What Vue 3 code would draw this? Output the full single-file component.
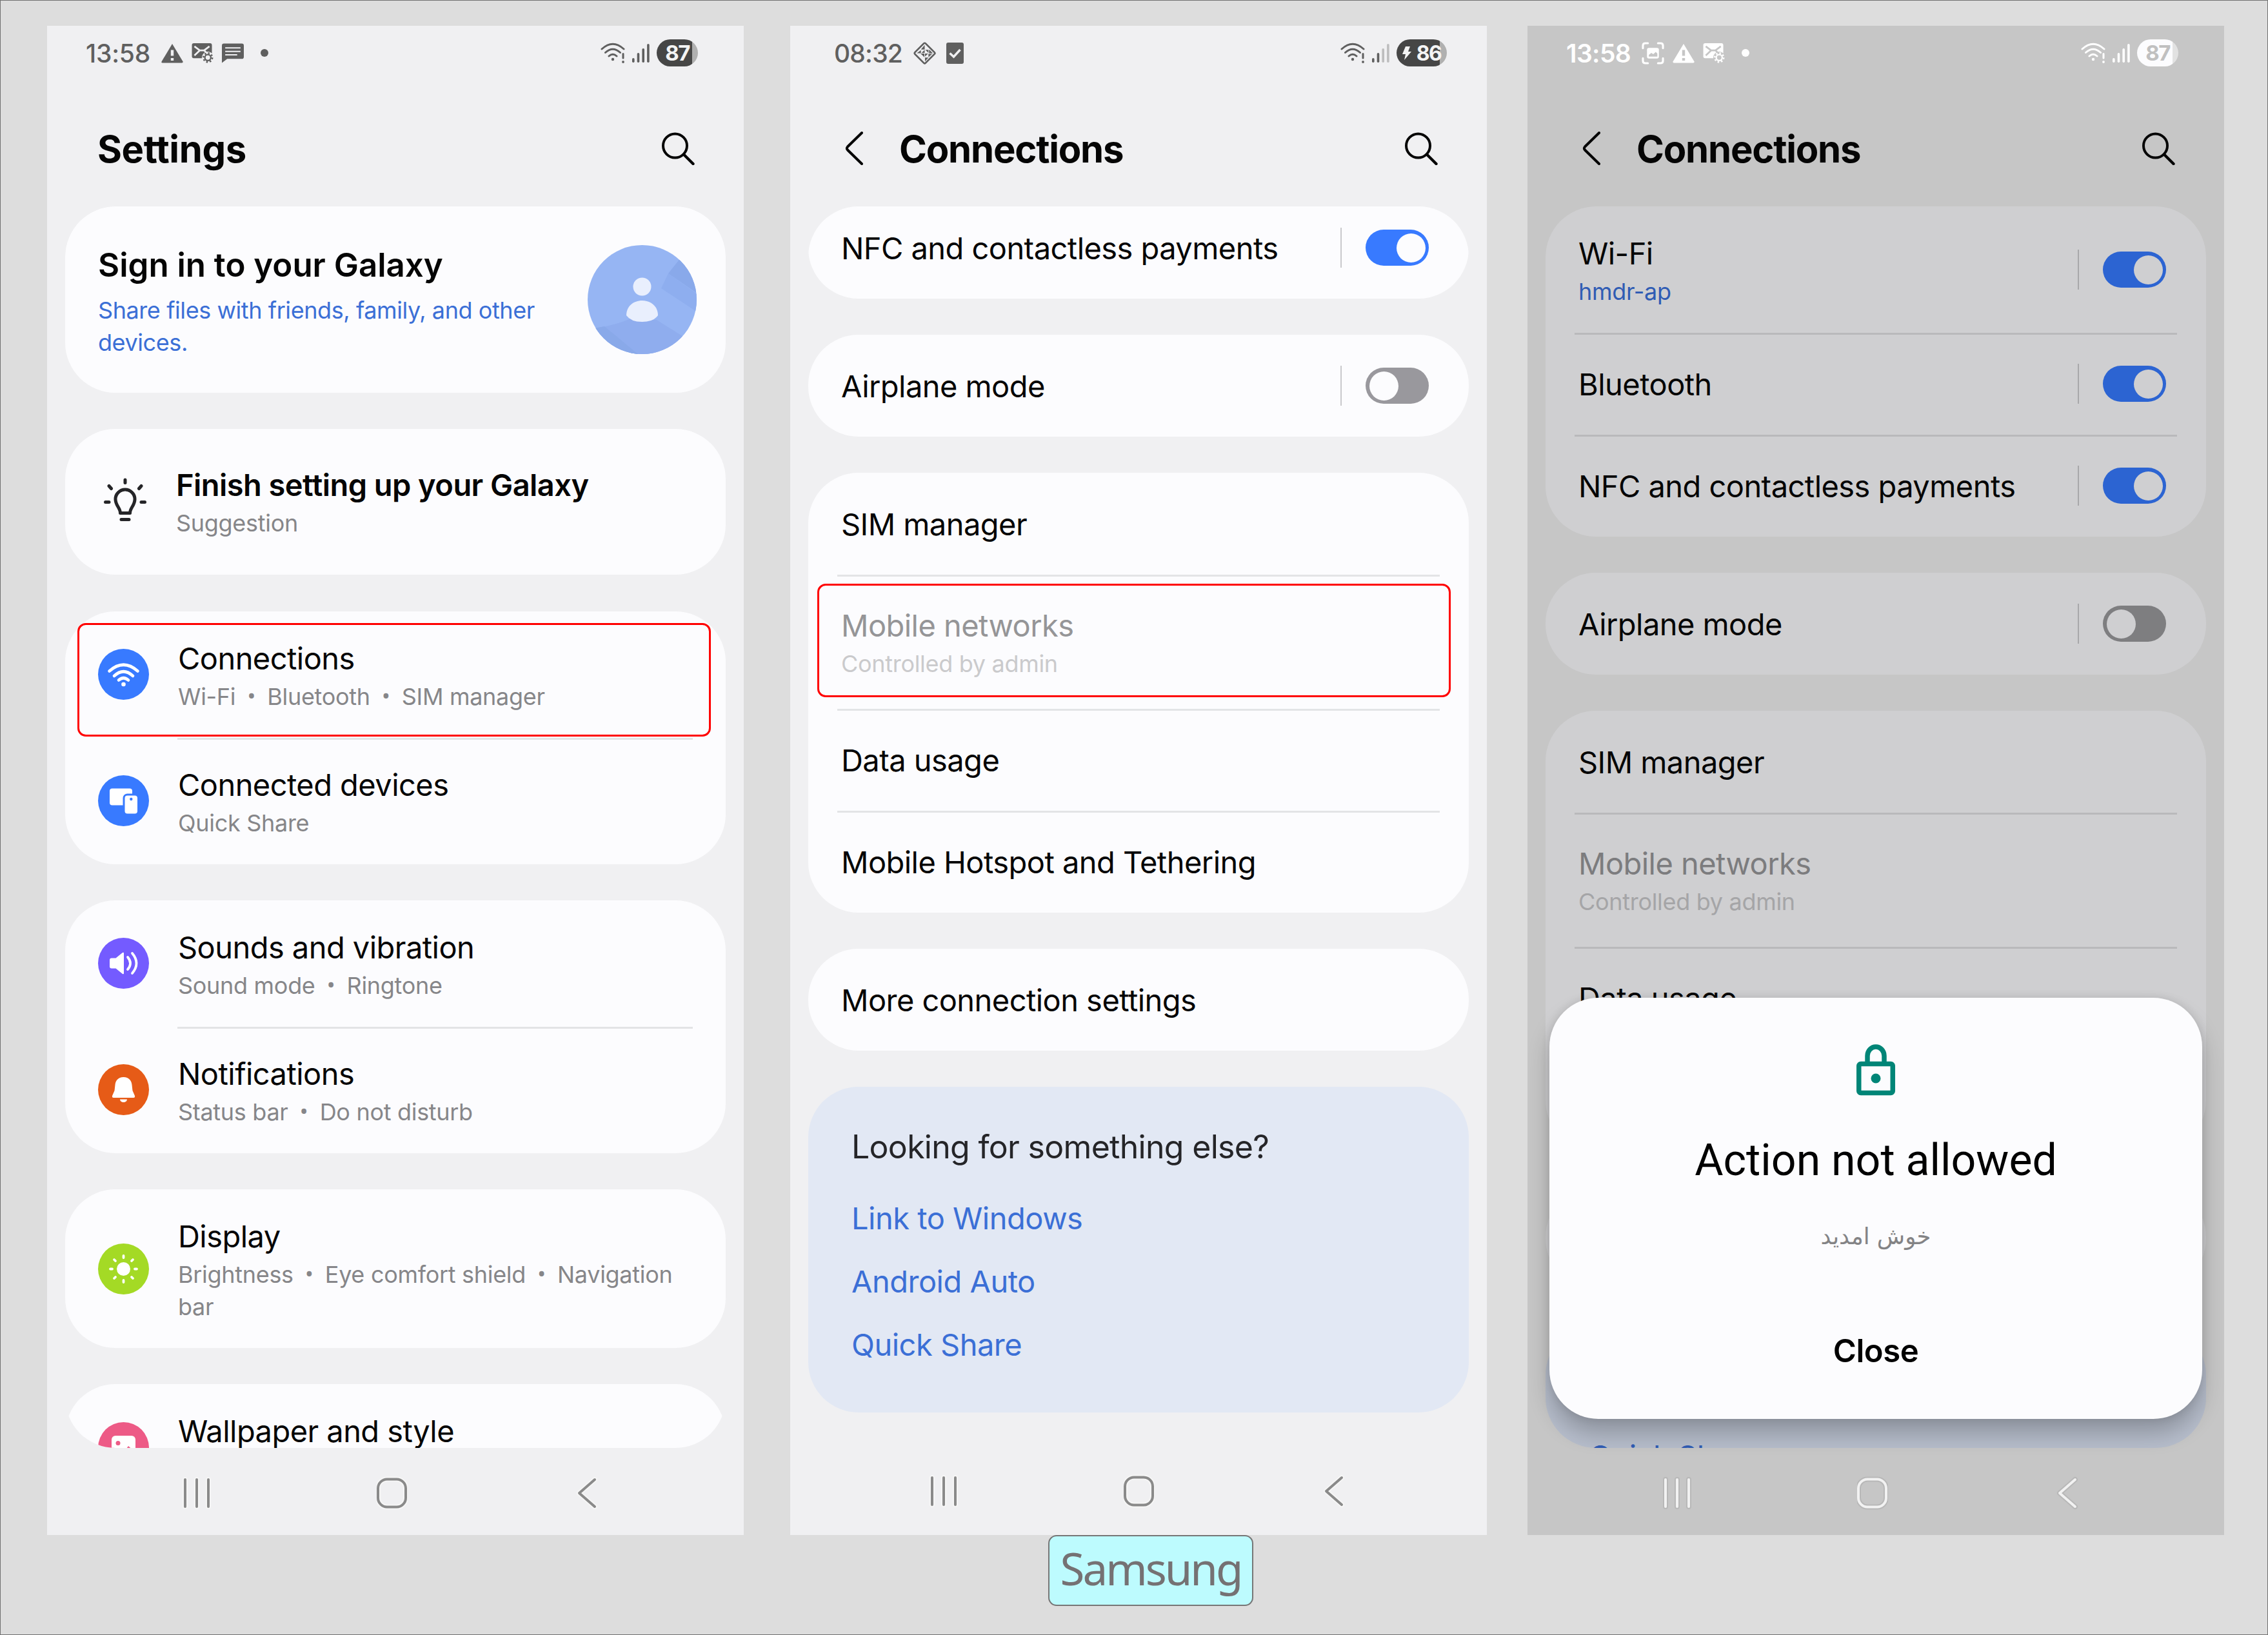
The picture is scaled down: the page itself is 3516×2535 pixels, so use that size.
<template>
  <div class="board">
    <svg class="sprite" aria-hidden="true">
      <symbol id="i-warning" viewBox="0 0 34 30">
        <path d="M17 0.5 L33.6 28 Q34 30 32 30 H2 Q0 30 0.5 28 Z" fill="currentColor" />
        <path d="M17 10v9M17 22.5v4" stroke="var(--bg)" stroke-width="4.4" />
      </symbol>
      <symbol id="i-mail" viewBox="0 0 34 32">
        <rect width="32" height="24" rx="3" fill="currentColor" />
        <path d="M4 5l8.5 6.5h7L28 5M4 19.500l8.500-8M19.500 11.500L23 15" fill="none" stroke="var(--bg)" stroke-width="2.8" />
        <circle cx="25.500" cy="23" r="9.500" fill="var(--bg)" />
        <circle cx="25.500" cy="23" r="4.800" fill="none" stroke="currentColor" stroke-width="2.400" />
        <circle cx="25.500" cy="23" r="7.200" fill="none" stroke="currentColor" stroke-width="2.600" stroke-dasharray="2.600 3.055" />
      </symbol>
      <symbol id="i-message" viewBox="0 0 33 29">
        <path d="M3 0H30Q33 0 33 3V20Q33 23 30 23H8L0 29V3Q0 0 3 0Z" fill="currentColor" />
        <path d="M5 6.500h23M5 11.800h23M5 17h18" stroke="var(--bg)" stroke-width="2" />
      </symbol>
      <symbol id="i-capture" viewBox="0 0 36 36">
        <path d="M2 10V6Q2 2 6 2H10M26 2H30Q34 2 34 6V10M34 26V30Q34 34 30 34H26M10 34H6Q2 34 2 30V26" fill="none" stroke="currentColor" stroke-width="3.200" stroke-linecap="round" />
        <rect x="8.500" y="9.500" width="19" height="17" rx="3" fill="currentColor" />
        <path d="M11.500 23.500v-3l4-3 3 2 4-3.500 2.500 2.500v5z" fill="var(--bg)" />
      </symbol>
      <symbol id="i-diamond" viewBox="0 0 38 38">
        <rect x="7" y="7" width="24" height="24" rx="2" transform="rotate(45 19 19)" fill="none" stroke="currentColor" stroke-width="2.800" />
        <path d="M19 6v7h-6zM13 14v5H6.500zM20 13.500h5v5zM26 13l6 6h-6zM12.500 19.500h6v6zM19 13.500v5h-5zM19.500 19.500h5l-5 5zM25 20h6l-6 5.500zM19.500 26h5.500l-5.500 6z" fill="currentColor" />
      </symbol>
      <symbol id="i-check" viewBox="0 0 27 33">
        <rect width="27" height="33" rx="3" fill="currentColor" />
        <path d="M5.500 16.500l6 5.500 10-11" fill="none" stroke="var(--bg)" stroke-width="3.400" />
      </symbol>
      <symbol id="i-wifi-alert" viewBox="0 0 39 32">
        <path d="M2 10Q19 -5.500 36 10M7.500 15.500Q19 5 30.500 15.500M13 21Q19 15.500 25 21" fill="none" stroke="currentColor" stroke-width="3" stroke-linecap="round" />
        <circle cx="19" cy="26" r="2.200" fill="currentColor" />
        <path d="M35 17.500v6.500" stroke="currentColor" stroke-width="3" stroke-linecap="round" />
        <circle cx="35" cy="30" r="1.900" fill="currentColor" />
      </symbol>
      <symbol id="i-search" viewBox="0 0 51 51">
        <circle cx="20.500" cy="21" r="18.500" fill="none" stroke="currentColor" stroke-width="4" />
        <path d="M34 34.500L48.500 49" stroke="currentColor" stroke-width="4.400" stroke-linecap="round" />
      </symbol>
      <symbol id="i-back" viewBox="0 0 28 52">
        <path d="M26 2L4 23.500Q1.800 26 4 28.500L26 50" fill="none" stroke="currentColor" stroke-width="4" stroke-linecap="round" />
      </symbol>
      <symbol id="i-bulb" viewBox="0 0 66 68">
        <g fill="none" stroke="currentColor" stroke-width="5">
          <path d="M25.500 54.500C25.500 46 18 43 18 33a15 15 0 0 1 30 0C48 43 40.500 46 40.500 54.500Z" stroke-linejoin="round" />
          <path d="M33 3v4.500M8 12.500l3.500 4M58 12.500l-3.500 4M2.500 37.500H8M58 37.500h5.500M27 64.500h12" stroke-linecap="round" />
        </g>
      </symbol>
      <symbol id="i-wifi" viewBox="0 0 79 79">
        <g fill="none" stroke="#fff" stroke-width="4.600" stroke-linecap="round">
          <path d="M17.500 34.500Q39.500 15 61.500 34.500M25 42Q39.500 28.500 54 42M32 48.500Q39.500 42 47 48.500" />
        </g>
        <circle cx="39.500" cy="55" r="3.300" fill="#fff" />
      </symbol>
      <symbol id="i-devices" viewBox="0 0 79 79">
        <rect x="18" y="20.500" width="35" height="26" rx="4" fill="#fff" />
        <rect x="38.500" y="28.500" width="26" height="34" rx="7" fill="#387aff" />
        <rect x="41.500" y="31.500" width="19.500" height="28" rx="4" fill="#fff" />
        <circle cx="51.300" cy="37" r="2.200" fill="#387aff" />
      </symbol>
      <symbol id="i-sound" viewBox="0 0 79 79">
        <path d="M21 31.500h6.500L38 23q2-1 2 1v31q0 2-2 1L27.500 47.500H21q-3 0-3-3v-10q0-3 3-3z" fill="#fff" />
        <path d="M46 30q8 9.500 0 19M53 24q13 15.500 0 31" fill="none" stroke="#fff" stroke-width="3.800" stroke-linecap="round" />
      </symbol>
      <symbol id="i-bell" viewBox="0 0 79 79">
        <path d="M39.500 20C31 20 27 26 26.500 32L25.500 41 22 49q-.6 3 2 3h31q2.600 0 2-3l-3.500-8-1-9C52 26 48 20 39.500 20z" fill="#fff" />
        <path d="M34 54.500h11a5.500 4.500 0 0 1-11 0z" fill="#fff" />
      </symbol>
      <symbol id="i-sun" viewBox="0 0 79 79">
        <circle cx="39.500" cy="39.500" r="10.500" fill="#fff" />
        <g stroke="#fff" stroke-width="3.800" stroke-linecap="round">
          <path d="M39.500 19v3M39.500 57v3M19 39.500h3M57 39.500h3M25 25l2 2M52 52l2 2M25 54l2-2M52 27l2-2" />
        </g>
      </symbol>
      <symbol id="i-picture" viewBox="0 0 79 79">
        <rect x="21" y="21" width="37" height="37" rx="6" fill="#fff" />
        <circle cx="31" cy="32.500" r="3.500" fill="#ed5a86" />
        <path d="M24 56l10-10 4 3 9-12 10 9v10z" fill="#ed5a86" />
      </symbol>
      <symbol id="i-avatar" viewBox="0 0 169 169">
        <clipPath id="avatar-clip"><circle cx="84.500" cy="84.500" r="84.500" /></clipPath>
        <g clip-path="url(#avatar-clip)">
          <rect width="169" height="169" fill="#96b5f3" />
          <path d="M144 20L170 10V75L125 44Z" fill="#89a9ea" />
          <path d="M125 44L170 76V104L114 67Z" fill="#8eaeef" />
          <path d="M0 130Q40 126 66 114L107 116 150 143 140 169H0Z" fill="#8fadee" />
          <path d="M0 130Q14 129 26 126L78 169H0Z" fill="#89a9e9" />
        </g>
        <circle cx="84.500" cy="64.500" r="14" fill="#e9effd" />
        <path d="M60 109C60 95 71 86 84.500 86S109 95 109 109Q102 119 84.500 119T60 109Z" fill="#e9effd" />
      </symbol>
      <symbol id="i-lock" viewBox="0 0 60 80">
        <g fill="none" stroke="#008577" stroke-width="7.500">
          <rect x="3.750" y="30.500" width="52.500" height="45" rx="3" />
          <path d="M17 30V18a13 14 0 0 1 26 0V30" />
        </g>
        <circle cx="30" cy="53" r="7.500" fill="#008577" />
      </symbol>
      <symbol id="i-recents" viewBox="0 0 48 52">
        <path d="M6 5v42M24 5v42M42 5v42" fill="none" stroke-linecap="round" />
      </symbol>
      <symbol id="i-home" viewBox="0 0 48 52">
        <rect x="2" y="4.500" width="43" height="43" rx="14" fill="none" />
      </symbol>
      <symbol id="i-nav-back" viewBox="0 0 48 52">
        <path d="M35 5L11 26 35 47" fill="none" stroke-linecap="round" stroke-linejoin="round" />
      </symbol>
    </svg>

    <section v-for="phone in phones" :key="phone.id" class="phone" :class="phone.id">
      <header class="status-bar">
        <span class="time">{{ phone.time }}</span>
        <svg v-for="icon in phone.statusIcons" :key="icon" class="status-icon" :class="icon">
          <use :href="`#i-${icon}`" />
        </svg>
        <i v-if="phone.moreNotifications" class="more-dot"></i>
        <div class="status-right">
          <svg class="wifi-alert"><use href="#i-wifi-alert" /></svg>
          <svg class="signal" viewBox="0 0 28 30">
            <rect
              v-for="bar in 4"
              :key="bar"
              :x="(bar - 1) * 7.7"
              :y="30 - barHeights[bar - 1]"
              width="3.6"
              :height="barHeights[bar - 1]"
              rx="1.8"
              fill="currentColor"
              :opacity="bar > phone.signal ? 0.35 : 1"
            />
          </svg>
          <div class="battery">
            <svg v-if="phone.charging" class="bolt" viewBox="0 0 14 21">
              <path d="M5 0h7L9 8h5L3 21l2-9H0z" fill="currentColor" />
            </svg>
            <span>{{ phone.battery }}</span>
          </div>
        </div>
      </header>

      <div class="app-bar">
        <svg v-if="phone.back" class="back"><use href="#i-back" /></svg>
        <h1>{{ phone.title }}</h1>
        <svg class="search"><use href="#i-search" /></svg>
      </div>

      <main class="list">
        <div v-for="(card, c) in phone.cards" :key="c" class="card" :class="card.type">
          <template v-if="card.type === 'account'">
            <div class="text">
              <h2>Sign in to your Galaxy</h2>
              <p>Share files with friends, family, and other devices.</p>
            </div>
            <svg class="avatar"><use href="#i-avatar" /></svg>
          </template>

          <template v-else-if="card.type === 'links'">
            <h3>Looking for something else?</h3>
            <a v-for="link in card.links" :key="link">{{ link }}</a>
          </template>

          <template v-else>
            <div
              v-for="row in card.rows"
              :key="row.title"
              class="row"
              :class="{ disabled: row.disabled, tall: row.disabled, inset: row.icon }"
            >
              <svg v-if="row.icon" class="row-icon" :class="row.icon"><use :href="`#i-${row.icon}`" /></svg>
              <div class="text" :class="{ double: row.sub }">
                <div class="title">{{ row.title }}</div>
                <div v-if="row.sub" class="sub" :class="{ link: row.subLink }">
                  <template v-for="(part, p) in row.sub" :key="part"><span v-if="p" class="bullet">•</span>{{ part }}</template>
                </div>
              </div>
              <div v-if="row.toggle" class="toggle-wrap">
                <span class="toggle" :class="row.toggle"></span>
              </div>
            </div>
          </template>
        </div>
      </main>

      <nav class="nav-bar">
        <svg v-for="key in ['recents', 'home', 'nav-back']" :key="key">
          <use class="halo" :href="`#i-${key}`" />
          <use :href="`#i-${key}`" />
        </svg>
      </nav>

      <div v-if="phone.highlight" class="highlight"></div>

      <div v-if="phone.dialog" class="dialog">
        <svg class="lock"><use href="#i-lock" /></svg>
        <h2>Action not allowed</h2>
        <p dir="rtl">خوش امدید</p>
        <button>Close</button>
      </div>
    </section>

    <div class="caption">Samsung</div>
  </div>
</template>

<script setup>
const barHeights = [7, 15, 22, 29]

const simRows = [
  { title: 'SIM manager' },
  { title: 'Mobile networks', sub: ['Controlled by admin'], disabled: true },
  { title: 'Data usage' },
  { title: 'Mobile Hotspot and Tethering' }
]

const phones = [
  {
    id: 'settings',
    time: '13:58',
    statusIcons: ['warning', 'mail', 'message'],
    moreNotifications: true,
    signal: 4,
    battery: 87,
    title: 'Settings',
    highlight: true,
    cards: [
      { type: 'account' },
      { type: 'suggestion', rows: [{ icon: 'bulb', title: 'Finish setting up your Galaxy', sub: ['Suggestion'] }] },
      {
        type: 'group',
        rows: [
          { icon: 'wifi', title: 'Connections', sub: ['Wi-Fi', 'Bluetooth', 'SIM manager'] },
          { icon: 'devices', title: 'Connected devices', sub: ['Quick Share'] }
        ]
      },
      {
        type: 'group',
        rows: [
          { icon: 'sound', title: 'Sounds and vibration', sub: ['Sound mode', 'Ringtone'] },
          { icon: 'bell', title: 'Notifications', sub: ['Status bar', 'Do not disturb'] }
        ]
      },
      {
        type: 'group',
        rows: [{ icon: 'sun', title: 'Display', sub: ['Brightness', 'Eye comfort shield', 'Navigation bar'] }]
      },
      { type: 'group', rows: [{ icon: 'picture', title: 'Wallpaper and style' }] }
    ]
  },
  {
    id: 'connections',
    time: '08:32',
    statusIcons: ['diamond', 'check'],
    signal: 2,
    battery: 86,
    charging: true,
    title: 'Connections',
    back: true,
    highlight: true,
    cards: [
      { type: 'group', rows: [{ title: 'NFC and contactless payments', toggle: 'on' }] },
      { type: 'group', rows: [{ title: 'Airplane mode', toggle: 'off' }] },
      { type: 'group', rows: simRows },
      { type: 'group', rows: [{ title: 'More connection settings' }] },
      { type: 'links', links: ['Link to Windows', 'Android Auto', 'Quick Share'] }
    ]
  },
  {
    id: 'blocked',
    time: '13:58',
    statusIcons: ['capture', 'warning', 'mail'],
    moreNotifications: true,
    signal: 4,
    battery: 87,
    title: 'Connections',
    back: true,
    dialog: true,
    cards: [
      {
        type: 'group',
        rows: [
          { title: 'Wi-Fi', sub: ['hmdr-ap'], subLink: true, toggle: 'on' },
          { title: 'Bluetooth', toggle: 'on' },
          { title: 'NFC and contactless payments', toggle: 'on' }
        ]
      },
      { type: 'group', rows: [{ title: 'Airplane mode', toggle: 'off' }] },
      { type: 'group', rows: simRows },
      { type: 'group', rows: [{ title: 'More connection settings' }] },
      { type: 'links', links: ['Quick Share'] }
    ]
  }
]
</script>

<style>
body {
  margin: 0;
  background: #dddddd;
}
</style>

<style scoped>
.board {
  box-sizing: border-box;
  width: 3516px;
  height: 2535px;
  padding: 39px 67px 0 72px;
  border: 1px solid #707070;
  background: #dddddd;
  display: grid;
  grid-template-columns: 1080px 1080px 1080px;
  column-gap: 72px;
  grid-template-rows: 2340px auto;
  font-family: Inter, "Liberation Sans", sans-serif;
  overflow: hidden;
}

.sprite {
  position: absolute;
  width: 0;
  height: 0;
}

.phone {
  --bg: #f0f0f2;
  --card: #fcfcfe;
  --text: #050505;
  --muted: #868689;
  --status: #5f5f5f;
  --battery: #464646;
  --battery-rest: #b0b0b0;
  --battery-text: #f4f4f4;
  --divider: #e3e4e6;
  --separator: #c9c9cc;
  --link: #3b6fd6;
  --toggle-on: #387aff;
  --toggle-off: #99989d;
  --disabled: #959597;
  --disabled-sub: #cacacc;
  --links-bg: #e2e8f4;
  --nav: #8a8a8a;
  --halo: #f6f6f6;

  position: relative;
  width: 1080px;
  height: 2340px;
  background: var(--bg);
  color: var(--text);
  display: flex;
  flex-direction: column;
}

.blocked {
  --bg: #c6c6c6;
  --card: #cfcfd1;
  --muted: #7f7f81;
  --status: #ffffff;
  --battery: #fcfcfe;
  --battery-rest: #e2e2e2;
  --battery-text: #c0c0c0;
  --divider: #b9b9bb;
  --separator: #a8a8aa;
  --link: #305cb4;
  --toggle-on: #2c64d2;
  --toggle-off: #7e7e80;
  --disabled: #7c7c7e;
  --disabled-sub: #a5a5a7;
  --links-bg: #b6bdcb;
  --nav: #f2f2f2;
  --halo: #b8b8b8;

  margin-left: -9px;
}

/* status bar */
.status-bar {
  flex: none;
  box-sizing: border-box;
  height: 84px;
  padding: 0 71px 0 60px;
  display: flex;
  align-items: center;
  color: var(--status);
}

.connections .status-bar {
  padding: 0 62px 0 68px;
}

.time {
  width: 117px;
  font-size: 39px;
  font-weight: 500;
  letter-spacing: -0.2px;
}

.connections .time {
  width: 122px;
  letter-spacing: -0.8px;
}

.blocked .time {
  font-weight: 600;
  letter-spacing: -0.6px;
}

.status-icon {
  width: 34px;
  height: 31px;
  margin-right: 13px;
}

.status-icon.capture,
.status-icon.diamond {
  width: 37px;
  height: 37px;
}

.status-icon.capture {
  width: 35px;
}

.status-icon.check {
  width: 27px;
  height: 33px;
  margin-left: 2px;
}

.more-dot {
  width: 12px;
  height: 12px;
  margin-left: 13px;
  border-radius: 50%;
  background: currentColor;
}

.status-right {
  margin-left: auto;
  display: flex;
  align-items: center;
}

.wifi-alert {
  width: 39px;
  height: 32px;
  margin-right: 10px;
}

.signal {
  width: 28px;
  height: 30px;
  margin-right: 10px;
}

.battery {
  width: 64px;
  height: 42px;
  border-radius: 21px;
  background: linear-gradient(90deg, var(--battery) 86%, var(--battery-rest) 86%);
  color: var(--battery-text);
  display: flex;
  align-items: center;
  justify-content: center;
  gap: 8px;
  font-size: 33px;
  font-weight: 700;
  letter-spacing: -1.5px;
}

.connections .battery {
  width: 78px;
  font-size: 32px;
}

.bolt {
  width: 14px;
  height: 21px;
}

/* app bar */
.app-bar {
  flex: none;
  box-sizing: border-box;
  height: 196px;
  padding: 16px 76px 0 78px;
  display: flex;
  align-items: center;
}

.connections .app-bar,
.blocked .app-bar {
  padding-left: 85px;
}

.back {
  width: 28px;
  height: 52px;
  margin-right: 56px;
}

.app-bar h1 {
  margin: 2px 0 0;
  font-size: 58px;
  line-height: 70px;
  font-weight: 700;
  letter-spacing: -1.2px;
}

.settings .app-bar h1 {
  letter-spacing: -0.4px;
}

.search {
  width: 51px;
  height: 51px;
  margin-left: auto;
}

/* scrolling list, clipped with the same radius as its cards */
.list {
  flex: none;
  height: 1925px;
  margin: 0 28px;
  border-radius: 78px;
  overflow: hidden;
  display: flex;
  flex-direction: column;
  gap: 56px;
}

.settings .list {
  gap: 56.3px;
}

.connections .card:first-child {
  margin-top: -15px;
}

.card {
  flex: none;
  border-radius: 78px;
  background: var(--card);
}

.account {
  box-sizing: border-box;
  height: 289px;
  padding: 0 45px 0 51px;
  display: flex;
  align-items: center;
  justify-content: space-between;
}

.account .text {
  width: 700px;
  padding-top: 6px;
}

.account h2 {
  margin: 0 0 14px;
  font-size: 51px;
  line-height: 62px;
  font-weight: 600;
}

.account p {
  margin: 0;
  color: var(--link);
  font-size: 36px;
  line-height: 50px;
  letter-spacing: -0.42px;
}

.avatar {
  width: 169px;
  height: 169px;
}

.row {
  position: relative;
  box-sizing: border-box;
  height: 158px;
  padding: 0 62px 0 51px;
  display: flex;
  align-items: center;
}

.row:has(.double) {
  height: 197px;
}

.row.tall:has(.double) {
  height: 208px;
}

.blocked .card:first-child .row:has(.double) {
  height: 196px;
}

.row.inset {
  height: auto;
  min-height: 196px;
  padding: 39px 50px 39px 51px;
}

.row.inset:has(.double) {
  height: auto;
}

.suggestion .row.inset {
  min-height: 226px;
}

.row + .row::before {
  content: "";
  position: absolute;
  top: 0;
  left: 45px;
  right: 45px;
  height: 3px;
  background: var(--divider);
}

.row.inset + .row.inset::before {
  left: 174px;
  right: 51px;
}

.row-icon {
  flex: none;
  width: 79px;
  height: 79px;
  margin-right: 45px;
  border-radius: 50%;
}

.row-icon.wifi,
.row-icon.devices {
  background: #387aff;
}

.row-icon.sound {
  background: #745bff;
}

.row-icon.bell {
  background: #e65b17;
}

.row-icon.sun {
  background: #a4da25;
}

.row-icon.picture {
  background: #ed5a86;
}

.row-icon.bulb {
  width: 66px;
  height: 68px;
  margin: 0 46px 6px 9px;
  border-radius: 0;
  color: #252528;
}

.text {
  padding-top: 2px;
}

/* the second line of the last row lies below the fold */
.inset .text:not(.double) {
  padding-bottom: 52px;
}

.title {
  font-size: 47px;
  line-height: 56px;
  letter-spacing: -0.55px;
  white-space: nowrap;
}

.suggestion .title {
  font-weight: 600;
}

.text.double {
  padding-top: 6px;
}

.suggestion .text.double {
  padding-top: 4px;
}

.sub {
  margin-top: 6px;
  color: var(--muted);
  font-size: 36px;
  line-height: 50px;
  letter-spacing: -0.3px;
}

.sub.link {
  color: var(--link);
}

.bullet {
  display: inline-block;
  width: 49px;
  font-family: Roboto, sans-serif;
  font-size: 38px;
  line-height: 1;
  text-align: center;
}

.disabled .title {
  color: var(--disabled);
}

.disabled .sub {
  color: var(--disabled-sub);
}

.toggle-wrap {
  margin-left: auto;
  height: 62px;
  padding-left: 37px;
  border-left: 2px solid var(--separator);
  display: flex;
  align-items: center;
}

.toggle {
  box-sizing: border-box;
  width: 98px;
  height: 56px;
  padding: 5.5px;
  border-radius: 28px;
  background: var(--toggle-off);
  display: flex;
}

.toggle::after {
  content: "";
  width: 45px;
  height: 45px;
  border-radius: 50%;
  background: var(--card);
}

.toggle.on {
  background: var(--toggle-on);
  justify-content: flex-end;
}

.links {
  box-sizing: border-box;
  height: 505px;
  padding: 62px 66px 0 67px;
  background: var(--links-bg);
  display: flex;
  flex-direction: column;
}

.links h3 {
  margin: 0 0 31px;
  color: #252528;
  font-size: 50px;
  line-height: 62px;
  font-weight: 400;
  letter-spacing: -0.7px;
}

.links a {
  color: var(--link);
  font-size: 47px;
  line-height: 98px;
  letter-spacing: -0.5px;
}

/* navigation bar */
.nav-bar {
  flex: none;
  box-sizing: border-box;
  height: 135px;
  padding: 5px 218px 0 208px;
  display: flex;
  align-items: center;
  justify-content: space-between;
}

.connections .nav-bar {
  padding: 0 212px 2px 214px;
}

.nav-bar svg {
  width: 48px;
  height: 52px;
  stroke: var(--nav);
  stroke-width: 4px;
}

.nav-bar .halo {
  stroke: var(--halo);
  stroke-width: 8px;
}

.highlight {
  position: absolute;
  box-sizing: border-box;
  left: 47px;
  top: 926px;
  width: 982px;
  height: 176px;
  border: 3px solid #ff0000;
  border-radius: 13px;
}

.connections .highlight {
  left: 42px;
  top: 865px;
}

.dialog {
  position: absolute;
  left: 34px;
  top: 1507px;
  width: 1012px;
  height: 653px;
  border-radius: 76px;
  background: #fcfcfe;
  box-shadow: 0 22px 34px rgba(0, 0, 0, 0.22), 0 0 14px rgba(0, 0, 0, 0.1);
  display: flex;
  flex-direction: column;
  align-items: center;
  color: #000;
}

.lock {
  width: 60px;
  height: 80px;
  margin-top: 72px;
}

.dialog h2 {
  margin: 58px 0 0;
  font-family: Roboto, sans-serif;
  font-size: 68px;
  line-height: 84px;
  font-weight: 400;
}

.dialog p {
  margin: 46px 0 0;
  color: #838385;
  font-family: "DejaVu Sans", sans-serif;
  font-size: 35.5px;
  line-height: 60px;
}

.dialog button {
  margin-top: 118px;
  padding: 0;
  border: none;
  background: none;
  color: #000;
  font-family: inherit;
  font-size: 49px;
  line-height: 60px;
  font-weight: 600;
  letter-spacing: -0.4px;
}

.caption {
  box-sizing: border-box;
  grid-column: 2;
  width: 318px;
  height: 110px;
  margin-left: 400px;
  border: 2px solid #767676;
  border-radius: 13px;
  background: #bdfbfe;
  color: #757173;
  font-family: "Noto Sans", "Open Sans", sans-serif;
  font-size: 69px;
  line-height: 98px;
  letter-spacing: -3px;
  text-align: center;
}
</style>
